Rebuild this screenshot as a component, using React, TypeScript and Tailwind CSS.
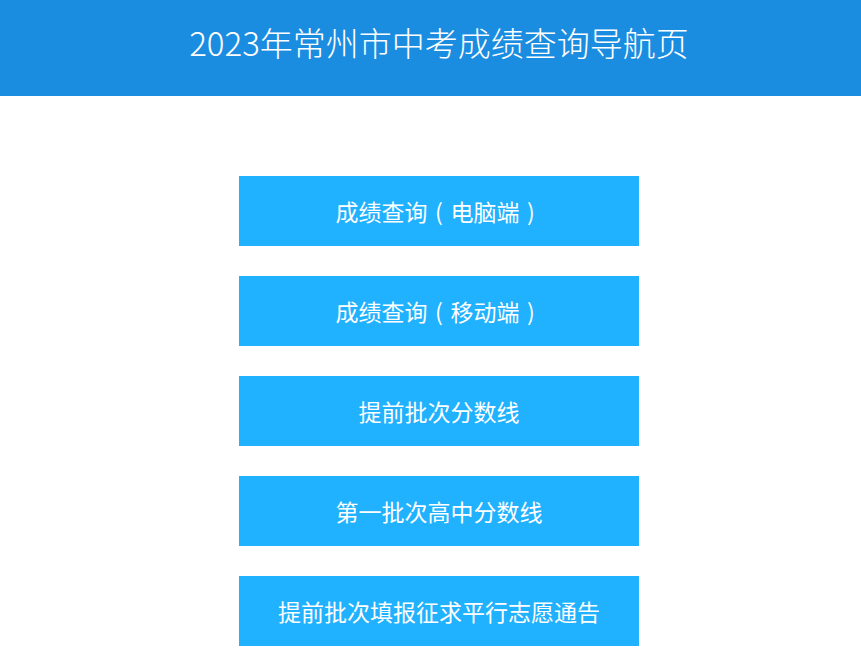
const links = [
  "成绩查询（电脑端）",
  "成绩查询（移动端）",
  "提前批次分数线",
  "第一批次高中分数线",
  "提前批次填报征求平行志愿通告",
];

// full-width parens sit centred in their box in the original font
function Label({ text }: { text: string }) {
  const parts = text.split(/([（）])/);
  return (
    <>
      {parts.map((p, i) =>
        p === "（" || p === "）" ? (
          <span key={i} className="inline-block w-[23px] text-center">
            {p === "（" ? "(" : ")"}
          </span>
        ) : (
          <span key={i}>{p}</span>
        ),
      )}
    </>
  );
}

export default function App() {
  return (
    <div className="min-h-screen bg-white font-['Noto_Sans_CJK_SC',sans-serif]">
      <header className="h-[96px] bg-[#1b8de1] flex justify-center pl-[17px] pt-[20px]">
        <h1 className="text-white text-[33px] leading-[44px] font-light">2023年常州市中考成绩查询导航页</h1>
      </header>
      <div className="flex flex-col items-center gap-[30px] pt-[80px] pl-[17px]">
        {links.map((label) => (
          <a
            key={label}
            href="#"
            className="w-[400px] h-[70px] bg-[#20b1ff] flex items-center justify-center text-white text-[23px]"
          >
            <Label text={label} />
          </a>
        ))}
      </div>
    </div>
  );
}
